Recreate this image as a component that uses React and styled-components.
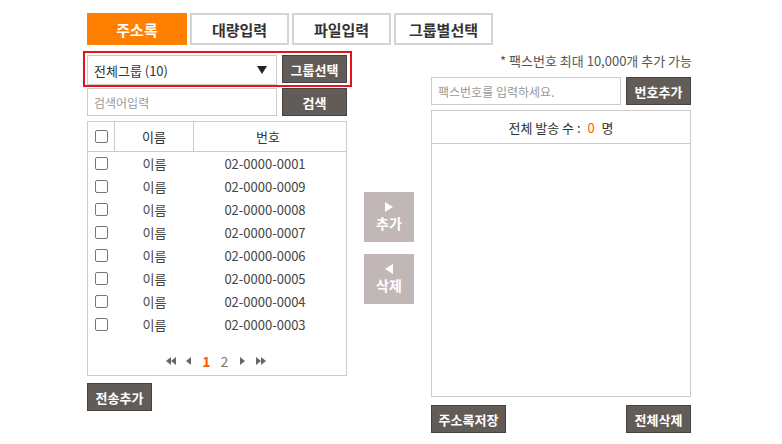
import React from 'react';
import styled, { createGlobalStyle } from 'styled-components';

const GlobalStyle = createGlobalStyle`
  html, body {
    margin: 0;
    padding: 0;
    background: #fff;
  }
  body {
    font-family: "Noto Sans CJK KR", "Noto Sans", sans-serif;
    font-size: 13px;
    color: #333;
  }
  * { box-sizing: border-box; }
`;

const rows = ['0001', '0009', '0008', '0007', '0006', '0005', '0004', '0003'];

const Tri = ({ dir = 'right', double }) => (
  <svg width={double ? 10 : 5} height="8" viewBox={double ? '0 0 10 8' : '0 0 5 8'}>
    {dir === 'right' ? (
      <>
        <polygon points="0,0 5,4 0,8" fill="#666" />
        {double && <polygon points="5,0 10,4 5,8" fill="#666" />}
      </>
    ) : (
      <>
        <polygon points="5,0 0,4 5,8" fill="#666" />
        {double && <polygon points="10,0 5,4 10,8" fill="#666" />}
      </>
    )}
  </svg>
);

const App = () => {
  return (
    <>
      <GlobalStyle />
      <Page>
        <Tabs>
          <Tab active>주소록</Tab>
          <Tab>대량입력</Tab>
          <Tab>파일입력</Tab>
          <Tab>그룹별선택</Tab>
        </Tabs>
        <Body>
          <LeftCol>
            <Highlight>
              <Select>
                <span>전체그룹 (10)</span>
                <Caret />
              </Select>
              <DarkButton w={65}>그룹선택</DarkButton>
            </Highlight>
            <Line>
              <Input placeholder="검색어입력" />
              <DarkButton w={65}>검색</DarkButton>
            </Line>
            <Table>
              <HeadRow>
                <CheckCell border><Check /></CheckCell>
                <NameCell border>이름</NameCell>
                <NumCell>번호</NumCell>
              </HeadRow>
              {rows.map((r) => (
                <Row key={r}>
                  <CheckCell><Check /></CheckCell>
                  <NameCell>이름</NameCell>
                  <NumCell body>02-0000-{r}</NumCell>
                </Row>
              ))}
              <Pager>
                <PageIcon><Tri dir="left" double /></PageIcon>
                <PageIcon><Tri dir="left" /></PageIcon>
                <PageNum current>1</PageNum>
                <PageNum>2</PageNum>
                <PageIcon><Tri dir="right" /></PageIcon>
                <PageIcon><Tri dir="right" double /></PageIcon>
              </Pager>
            </Table>
            <DarkButton w={65} h={28} style={{ marginTop: 7 }}>전송추가</DarkButton>
          </LeftCol>

          <MidCol>
            <MoveButton>
              <svg width="8" height="10" viewBox="0 0 8 10"><polygon points="0,0 8,5 0,10" fill="#fff" /></svg>
              <span>추가</span>
            </MoveButton>
            <MoveButton>
              <svg width="8" height="10" viewBox="0 0 8 10"><polygon points="8,0 0,5 8,10" fill="#fff" /></svg>
              <span>삭제</span>
            </MoveButton>
          </MidCol>

          <RightCol>
            <Note>* 팩스번호 최대 10,000개 추가 가능</Note>
            <Line>
              <Input placeholder="팩스번호를 입력하세요." />
              <DarkButton w={65}>번호추가</DarkButton>
            </Line>
            <SendBox>
              <SendHead>
                전체 발송 수 : <Count>0</Count> 명
              </SendHead>
            </SendBox>
            <BottomLine>
              <DarkButton w={75} h={28}>주소록저장</DarkButton>
              <DarkButton w={65} h={28}>전체삭제</DarkButton>
            </BottomLine>
          </RightCol>
        </Body>
      </Page>
    </>
  );
};

export default App;

const Page = styled.div`
  width: 604px;
  margin: 0 auto;
  padding-top: 13px;
  position: relative;
  left: -2px;
`;

const Tabs = styled.div`
  display: flex;
  gap: 3px;
`;

const Tab = styled.div`
  width: ${(p) => (p.active ? 100 : 99)}px;
  height: 32px;
  display: flex;
  align-items: center;
  justify-content: center;
  font-size: 15px;
  font-weight: 700;
  color: ${(p) => (p.active ? '#fff' : '#333')};
  background: ${(p) => (p.active ? '#ff7f00' : '#fff')};
  border: 2px solid ${(p) => (p.active ? '#ff7f00' : '#d4d4d4')};
`;

const Body = styled.div`
  display: flex;
  gap: 17px;
  margin-top: 6px;
`;

const LeftCol = styled.div`
  width: 260px;
  display: flex;
  flex-direction: column;
`;

const Highlight = styled.div`
  display: flex;
  gap: 5px;
  margin: 0 -5px 0 -4px;
  padding: 2px 3px 0 2px;
  height: 36px;
  border: 2px solid #e8121a;
`;

const Line = styled.div`
  display: flex;
  justify-content: space-between;
  gap: 5px;
  margin-top: 1px;
`;

const Select = styled.div`
  width: 190px;
  height: 30px;
  border: 1px solid #ccc;
  display: flex;
  align-items: center;
  justify-content: space-between;
  padding: 0 9px 0 6px;
  font-size: 13px;
  color: #333;
`;

const Caret = styled.span`
  width: 0;
  height: 0;
  border-left: 5px solid transparent;
  border-right: 5px solid transparent;
  border-top: 8px solid #222;
`;

const Input = styled.input`
  width: 190px;
  height: 28px;
  border: 1px solid #ccc;
  padding: 0 6px;
  font-family: inherit;
  font-size: 12px;
  color: #333;
  outline: none;
  &::placeholder {
    color: #999;
  }
`;

const DarkButton = styled.button`
  width: ${(p) => p.w}px;
  height: ${(p) => p.h || 28}px;
  flex-shrink: 0;
  background: #615c58;
  border: 1px solid #45413e;
  color: #fff;
  font-family: inherit;
  font-size: 13px;
  font-weight: 700;
  padding: 0;
  cursor: pointer;
`;

const Table = styled.div`
  margin-top: 5px;
  height: 255px;
  border: 1px solid #ccc;
  display: flex;
  flex-direction: column;
`;

const HeadRow = styled.div`
  display: flex;
  height: 30px;
  border-bottom: 1px solid #ccc;
  font-size: 13px;
  color: #333;
`;

const Row = styled.div`
  display: flex;
  height: 23px;
  font-size: 13px;
  color: #444;
`;

const CheckCell = styled.div`
  width: 27px;
  display: flex;
  align-items: center;
  justify-content: center;
  border-right: ${(p) => (p.border ? '1px solid #ccc' : 'none')};
`;

const NameCell = styled.div`
  width: 79px;
  display: flex;
  align-items: center;
  justify-content: center;
  border-right: ${(p) => (p.border ? '1px solid #ccc' : 'none')};
`;

const NumCell = styled.div`
  flex: 1;
  display: flex;
  align-items: center;
  justify-content: center;
  padding-right: ${(p) => (p.body ? 10 : 4)}px;
`;

const Check = styled.span`
  width: 13px;
  height: 13px;
  border: 1px solid #777;
  border-radius: 2px;
  background: #fff;
`;

const Pager = styled.div`
  margin-top: auto;
  height: 28px;
  display: flex;
  align-items: center;
  justify-content: center;
  gap: 8px;
  padding-right: 3px;
`;

const PageIcon = styled.span`
  display: flex;
  align-items: center;
  width: 10px;
  justify-content: center;
`;

const PageNum = styled.span`
  font-size: 14px;
  width: 10px;
  text-align: center;
  color: ${(p) => (p.current ? '#ff5a00' : '#777')};
  font-weight: ${(p) => (p.current ? 700 : 400)};
`;

const MidCol = styled.div`
  width: 50px;
  display: flex;
  flex-direction: column;
  gap: 12px;
  padding-top: 141px;
`;

const MoveButton = styled.div`
  width: 50px;
  height: 50px;
  background: #c1b7b7;
  color: #fff;
  display: flex;
  flex-direction: column;
  align-items: center;
  justify-content: center;
  gap: 1px;
  font-size: 14px;
  font-weight: 700;
  span {
    line-height: 20px;
  }
`;

const RightCol = styled.div`
  width: 260px;
  display: flex;
  flex-direction: column;
`;

const Note = styled.div`
  height: 20px;
  margin-top: 0;
  text-align: right;
  font-size: 13px;
  color: #555;
  line-height: 20px;
  margin-right: -1px;
  margin-bottom: 5px;
`;

const SendBox = styled.div`
  margin-top: 5px;
  height: 287px;
  border: 1px solid #ccc;
`;

const SendHead = styled.div`
  height: 33px;
  border-bottom: 1px solid #ccc;
  display: flex;
  align-items: center;
  justify-content: center;
  font-size: 13px;
  color: #333;
  white-space: pre;
`;

const Count = styled.span`
  color: #ff5a00;
  margin: 0 4px;
`;

const BottomLine = styled.div`
  display: flex;
  justify-content: space-between;
  margin-top: 8px;
`;
